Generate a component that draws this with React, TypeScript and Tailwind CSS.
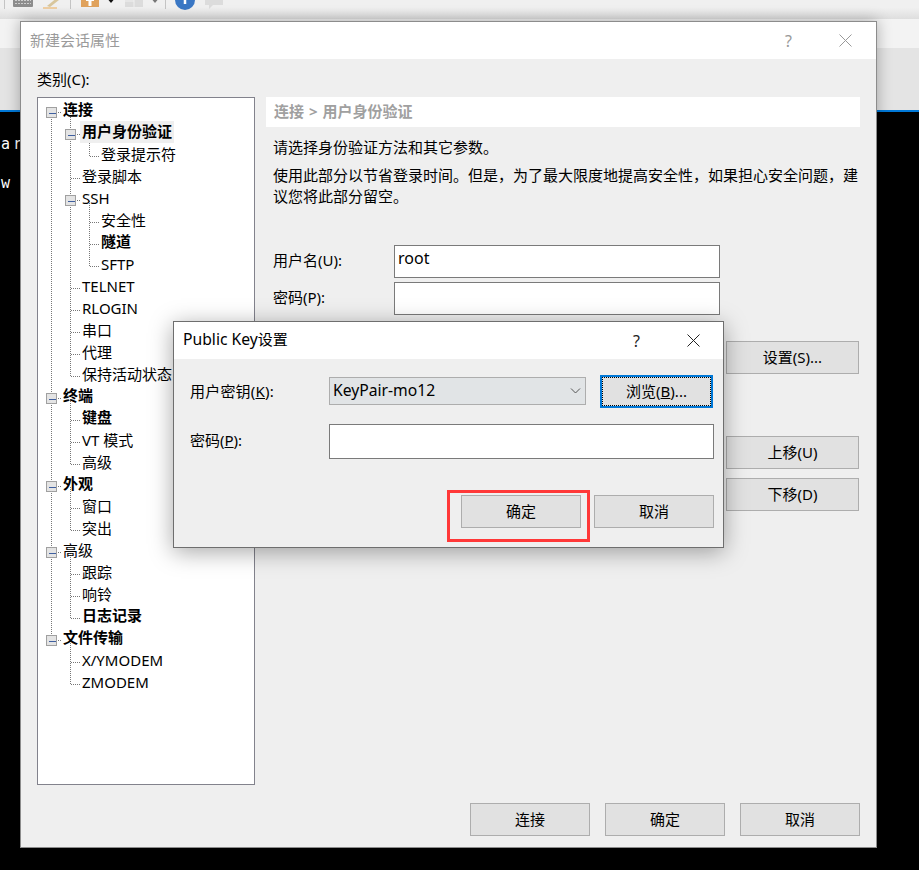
const FONT = "font-['Noto_Sans','Noto_Sans_CJK_SC',sans-serif]";

type TreeItem = { label: string; level: 0 | 1 | 2; bold?: boolean; selected?: boolean };

const treeItems: TreeItem[] = [
  { label: "连接", level: 0, bold: true },
  { label: "用户身份验证", level: 1, bold: true, selected: true },
  { label: "登录提示符", level: 2 },
  { label: "登录脚本", level: 1 },
  { label: "SSH", level: 1 },
  { label: "安全性", level: 2 },
  { label: "隧道", level: 2, bold: true },
  { label: "SFTP", level: 2 },
  { label: "TELNET", level: 1 },
  { label: "RLOGIN", level: 1 },
  { label: "串口", level: 1 },
  { label: "代理", level: 1 },
  { label: "保持活动状态", level: 1 },
  { label: "终端", level: 0, bold: true },
  { label: "键盘", level: 1, bold: true },
  { label: "VT 模式", level: 1 },
  { label: "高级", level: 1 },
  { label: "外观", level: 0, bold: true },
  { label: "窗口", level: 1 },
  { label: "突出", level: 1 },
  { label: "高级", level: 0 },
  { label: "跟踪", level: 1 },
  { label: "响铃", level: 1 },
  { label: "日志记录", level: 1, bold: true },
  { label: "文件传输", level: 0, bold: true },
  { label: "X/YMODEM", level: 1 },
  { label: "ZMODEM", level: 1 },
];

const paddingByLevel = {
  0: "pl-[23px]",
  1: "pl-[42px]",
  2: "pl-[61px]",
};

// tree coordinates are relative to the white box
const ROW = 22;
const FIRST_Y = 14;

const Expander = ({ x, y }: { x: number; y: number }) => (
  <g>
    <rect x={x - 5} y={y - 5} width="10" height="10" fill="#e4e4e4" stroke="#a0a0a0" />
    <path d={`M${x - 3} ${y + 0.5}H${x + 4}`} stroke="#3f5f9f" />
  </g>
);

const TreeLines = () => {
  const dotted = { stroke: "#777", strokeDasharray: "1 1", fill: "none" };
  const rowY = (i: number) => FIRST_Y + i * ROW + 0.5;
  const parts: React.ReactElement[] = [];

  // trunk of the top level
  parts.push(<path key="trunk" d={`M13.5 ${rowY(0)}V${rowY(24)}`} {...dotted} />);

  treeItems.forEach((item, i) => {
    if (item.level === 0) {
      parts.push(<path key={`h${i}`} d={`M18 ${rowY(i)}H24`} {...dotted} />);
      const next = treeItems.slice(i + 1).findIndex((t) => t.level === 0);
      const end = next === -1 ? treeItems.length - 1 : i + next;
      let lastChild = i;
      for (let j = i + 1; j <= end; j++) if (treeItems[j].level === 1) lastChild = j;
      parts.push(<path key={`v${i}`} d={`M32.5 ${rowY(i)}V${rowY(lastChild)}`} {...dotted} />);
    }
    if (item.level === 1) {
      parts.push(<path key={`h${i}`} d={`M33 ${rowY(i)}H43`} {...dotted} />);
      const next = treeItems[i + 1];
      if (next && next.level === 2) {
        let last = i;
        for (let j = i + 1; j < treeItems.length && treeItems[j].level === 2; j++) last = j;
        parts.push(<path key={`c${i}`} d={`M51.5 ${rowY(i)}V${rowY(last)}`} {...dotted} />);
      }
    }
    if (item.level === 2) {
      parts.push(<path key={`h${i}`} d={`M52 ${rowY(i)}H62`} {...dotted} />);
    }
  });

  treeItems.forEach((item, i) => {
    if (item.level === 0) parts.push(<Expander key={`e${i}`} x={13.5} y={rowY(i)} />);
    if (item.label === "用户身份验证" || item.label === "SSH")
      parts.push(<Expander key={`e${i}`} x={32.5} y={rowY(i)} />);
  });

  return (
    <svg className="pointer-events-none absolute left-0 top-0" width="216" height="686" shapeRendering="crispEdges">
      {parts}
    </svg>
  );
};

const CategoryTree = () => (
  <div className="relative h-[688px] w-[218px] shrink-0 border border-[#82828c] bg-white pt-px">
    <TreeLines />
    {treeItems.map((item, i) => (
      <div key={i} className={`relative flex h-[22px] items-start ${paddingByLevel[item.level]}`}>
        <span
          className={`block h-[22px] whitespace-nowrap px-[2px] text-[15px] text-black ${item.bold ? "font-bold leading-[20px]" : "leading-[22px]"} ${item.selected ? "bg-[#efefef]" : ""}`}
        >
          {item.label}
        </span>
      </div>
    ))}
  </div>
);

const WinButton = ({ children, className = "" }: { children: React.ReactNode; className?: string }) => (
  <button
    type="button"
    className={`flex h-[33px] shrink-0 items-center justify-center border border-[#adadad] bg-[#e1e1e1] text-[15px] text-black ${className}`}
  >
    {children}
  </button>
);

const CloseIcon = ({ color }: { color: string }) => (
  <svg width="13" height="13" viewBox="0 0 13 13">
    <path d="M.5.5l12 12M12.5.5l-12 12" stroke={color} fill="none" />
  </svg>
);

const Toolbar = () => (
  <div className="h-[19px] bg-gradient-to-b from-[#f0f0f0] from-40% to-[#dedede]">
    <svg width="240" height="19" viewBox="0 0 240 19">
      <path d="M4.500 0v9M70.500 0v9M165.500 0v9" stroke="#c4c4c4" />
      {/* keyboard */}
      <rect x="13" y="-4" width="20" height="11" rx="1" fill="#8d8d8d" />
      <path d="M15 .5h16M15 3.500h16" stroke="#cfcfcf" strokeDasharray="2 1" />
      {/* pencil */}
      <path d="M43 8h14" stroke="#efc48a" strokeWidth="1.500" />
      <path d="M47 6l11-9 1 3-9 7z" fill="#d8c69c" />
      {/* orange box */}
      <rect x="81" y="-6" width="18" height="13" fill="#e0a25c" />
      <path d="M86 1h8v-3h-8zM88.500 1h3v5h-3z" fill="#fff" />
      <path d="M108.500 0h5l-2.500 3z" fill="#111" />
      {/* grey panes */}
      <rect x="125" y="-6" width="18" height="13" fill="#dcdcdc" />
      <path d="M134-6v13M125 1h9" stroke="#f0f0f0" />
      <path d="M152.500 0h5L155 3z" fill="#777" />
      {/* help */}
      <circle cx="185" cy="0" r="10" fill="#3a77c4" />
      <path d="M185-1v5" stroke="#fff" strokeWidth="2.500" />
      {/* comment */}
      <path d="M205-4h18v9h-10l-4 4v-4h-4z" fill="#dcdcdc" />
    </svg>
  </div>
);

const Terminal = () => (
  <div className="flex-1 bg-black pl-[1px] pt-[13px] font-['DejaVu_Sans_Mono',monospace] text-[15px] leading-[39px] tracking-[3px] text-white">
    <div>ara</div>
    <div>w t</div>
  </div>
);

const PublicKeyDialog = () => (
  <div className="absolute left-[173px] top-[321px] flex h-[227px] w-[551px] flex-col border border-[#6e6e6e] bg-[#efefef] shadow-[0_4px_22px_rgba(0,0,0,0.35)]">
    <div className="flex h-[37px] shrink-0 items-center bg-white pl-[9px] pr-[23px]">
      <span className="flex-1 pb-[2px] text-[15px] text-black">
        <span className="text-[15.7px]">Public Key</span>设置
      </span>
      <span className="mr-[47px] text-[16px] text-[#222]">?</span>
      <CloseIcon color="#222" />
    </div>
    <div className="flex flex-col pl-[16px] pt-[16px]">
      <div className="flex h-[33px] items-center">
        <span className="w-[139px] shrink-0 text-[15px] tracking-[0.2px] text-black">
          用户密钥(<u>K</u>):
        </span>
        <div className="mb-[2px] flex h-[28px] w-[257px] shrink-0 items-center justify-between border border-[#adadad] bg-[#e1e4e6] pl-[3px] pr-[4px] text-[15.7px] text-black">
          KeyPair-mo12
          <svg width="11" height="6" viewBox="0 0 11 6">
            <path d="M1 .5l4.500 4.500 4.500-4.500" stroke="#555" fill="none" />
          </svg>
        </div>
        <button
          type="button"
          className="ml-[14px] flex h-[33px] w-[113px] shrink-0 items-center justify-center border-2 border-[#0078d7] bg-[#e1e1e1] text-[15px] text-black outline-1 -outline-offset-3 outline-dotted outline-black"
        >
          浏览(<u>B</u>)...
        </button>
      </div>
      <div className="mt-[16px] flex h-[35px] items-center">
        <span className="w-[139px] shrink-0 pb-[2px] text-[15px] text-black">
          密码(<u>P</u>):
        </span>
        <div className="h-[35px] w-[385px] shrink-0 border border-[#7a7a7a] bg-white" />
      </div>
    </div>
    <div className="mt-[36px] flex gap-[13px] pl-[287px]">
      <WinButton className="w-[120px]">确定</WinButton>
      <WinButton className="w-[120px]">取消</WinButton>
    </div>
    {/* annotation round the confirm button */}
    <div className="absolute left-[273px] top-[168px] h-[52px] w-[143px] border-[3px] border-[#ff3838]" />
  </div>
);

const SessionDialog = () => (
  <div className="absolute left-[20px] top-[21px] flex h-[827px] w-[857px] flex-col border border-[#8c8c8c] bg-[#efefef] shadow-[0_0_14px_rgba(0,0,0,0.3)]">
    <div className="flex h-[37px] shrink-0 items-center bg-white pl-[9px] pr-6">
      <span className="flex-1 text-[15px] text-[#9b9b9b]">新建会话属性</span>
      <span className="mr-[47px] text-[16px] text-[#999]">?</span>
      <CloseIcon color="#999" />
    </div>
    <div className="pb-px pl-[16px] pt-[9px] text-[15px] leading-[22px] text-black">类别(C):</div>
    <div className="mt-[6px] flex pl-[16px]">
      <CategoryTree />
      <div className="ml-[11px] flex w-[594px] flex-col">
        <div className="flex h-[30px] items-center bg-white pb-[2px] pl-[8px] text-[15px] font-bold text-[#a0a0a0] [word-spacing:1px]">
          连接 &gt; 用户身份验证
        </div>
        <div className="mt-[9px] pl-[7px] text-[15px] leading-[22px] text-black">请选择身份验证方法和其它参数。</div>
        <div className="mt-[7px] pl-[7px] text-[15px] leading-[21px] text-black">
          使用此部分以节省登录时间。但是，为了最大限度地提高安全性，如果担心安全问题，建
          <br />
          议您将此部分留空。
        </div>
        <div className="mt-[38px] flex h-[33px] items-center pl-[7px]">
          <span className="w-[121px] pb-[2px] text-[15px] text-black">用户名(U):</span>
          <div className="flex h-[33px] w-[326px] items-center border border-[#7a7a7a] bg-white pb-[7px] pl-[3px] text-[16px] text-black">
            root
          </div>
        </div>
        <div className="mt-[4px] flex h-[33px] items-center pl-[7px]">
          <span className="w-[121px] pb-[2px] text-[15px] text-black">密码(P):</span>
          <div className="h-[33px] w-[326px] border border-[#7a7a7a] bg-white" />
        </div>
        <div className="mt-[26px] flex flex-col items-end pr-px">
          <WinButton className="w-[133px]">设置(S)...</WinButton>
          <WinButton className="mt-[62px] w-[133px]">上移(U)</WinButton>
          <WinButton className="mt-[9px] w-[133px]">下移(D)</WinButton>
        </div>
      </div>
    </div>
    <div className="mt-[18px] flex justify-end gap-[15px] pr-[16px]">
      <WinButton className="w-[120px]">连接</WinButton>
      <WinButton className="w-[120px]">确定</WinButton>
      <WinButton className="w-[120px]">取消</WinButton>
    </div>
  </div>
);

const App = () => (
  <div className={`relative flex h-[870px] w-[919px] flex-col overflow-hidden bg-black ${FONT}`}>
    <Toolbar />
    <div className="h-[29px] shrink-0 bg-[#f3f3f3]" />
    <div className="h-[62px] shrink-0 bg-[#e4e4e4]" />
    <div className="h-[2px] shrink-0 bg-[#0078d7]" />
    <Terminal />
    <SessionDialog />
    <PublicKeyDialog />
  </div>
);

export default App;
